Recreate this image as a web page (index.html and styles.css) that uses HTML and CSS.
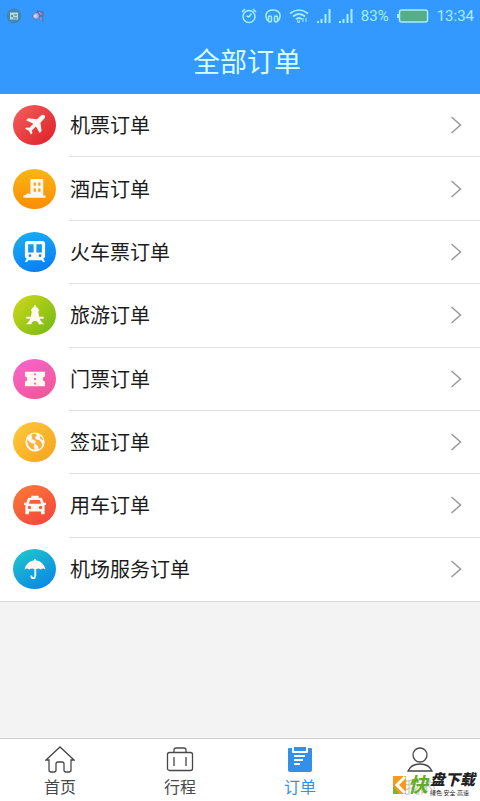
FILE: index.html
```html
<!DOCTYPE html>
<html lang="zh-CN">
<head>
<meta charset="utf-8">
<meta name="viewport" content="width=device-width, initial-scale=1">
<title>全部订单</title>
<link rel="stylesheet" href="styles.css">
</head>
<body>
<header class="header">
  <div class="status">
    <div class="notices">
      <svg width="16" height="16" viewBox="0 0 16 16"><circle cx="8" cy="8" r="7.500" fill="#4387ae"/><path d="M4 4.500h8v7H4z" fill="#b5dce6"/><path d="M5 7l2 1-2 1M8 7h3M7 10h4" stroke="#39799b" fill="none"/></svg>
      <svg width="14" height="16" viewBox="0 0 14 16"><circle cx="5" cy="8" r="3.500" fill="#8fb5ef" stroke="#6674b5"/><circle cx="4.500" cy="8" r="1.500" fill="#d8ddf5"/><path d="M6 3l6 1v5l-3-2zM8 8l4 3v3" fill="#7884bd" stroke="#5268a8"/><path d="M8 4l2 3M10 9v3" stroke="#d48daf"/></svg>
    </div>
    <div class="signals">
      <svg class="alarm" width="16" height="16" viewBox="0 0 16 16"><circle cx="8" cy="8.500" r="6"/><path d="M1 4l3-3M12 1l3 3M8 9l2.500-3.500M8 9L5.500 8"/></svg>
      <svg class="phones" width="16" height="16" viewBox="0 0 16 16"><path d="M3 13C-1 8 1 2 8 2s9 6 5 11"/><rect x="3.500" y="8" width="3" height="6" rx="1.500"/><rect x="9.500" y="8" width="3" height="6" rx="1.500"/></svg>
      <svg class="wifi" width="20" height="16" viewBox="0 0 20 16"><path d="M1 5.500q9-7 18 0M4 8.500q6-5 12 0M7 11.500q3-3 6 0" stroke-width="1.700"/><path d="M8 13h3l-1.500 2zM14 10v4M17 10v4" stroke-width="1"/></svg>
      <svg class="bars" width="14" height="16" viewBox="0 0 14 16"><path d="M1 13v2M4.500 11v4M8.500 6v9M12.500 1v14"/></svg>
      <svg class="bars" width="14" height="16" viewBox="0 0 14 16"><path d="M1 13v2M4.500 11v4M8.500 6v9M12.500 1v14"/></svg>
      <span class="percent">83%</span>
      <svg class="battery" width="32" height="14" viewBox="0 0 32 14"><rect x="2.500" y="1" width="28" height="12" rx="2" fill="#55ae87"/><path d="M1 5v4" stroke-width="2"/></svg>
      <span class="time">13:34</span>
    </div>
  </div>
  <h1 class="title">全部订单</h1>
</header>

<main class="main">
  <ul class="orders">
    <li><a class="order" href="#flight">
      <span class="badge red"><svg viewBox="0 0 24 24"><path d="M22.500 1.500c1 1 .4 2.900-1 4.300l-3.600 3.700 1.300 9.100-2.100 2-4.100-7.100-4.300 4.200.4 3.200-1.500 1.400-2.300-4-4.200-2.200L2.600 14.600l3.300.4 4.200-4.300-7.800-4L4.400 4.500l9.800 1.300L17.900 2.300c1.500-1.400 3.600-1.800 4.600-.8z"/></svg></span>
      <span class="name">机票订单</span><svg class="arrow" viewBox="0 0 12 18"><path d="M1.500 1l9 8-9 8"/></svg></a></li>
    <li><a class="order" href="#hotel">
      <span class="badge orange"><svg viewBox="0 0 24 24"><path fill-rule="evenodd" d="M7 2.500Q7 1 8.500 1h11Q21 1 21 2.500V19h2.500v2.500H-.5V19c1-.8 2-.8 2.700-.5.8-2 3.600-1.900 4.800-.6zM10.500 5v3.500h2.500V5zm5 0v3.500H18V5zm-5 6.500V15h2.500v-3.500zm5 0V15H18v-3.500z"/></svg></span>
      <span class="name">酒店订单</span><svg class="arrow" viewBox="0 0 12 18"><path d="M1.500 1l9 8-9 8"/></svg></a></li>
    <li><a class="order" href="#train">
      <span class="badge blue"><svg viewBox="0 0 24 24"><path fill-rule="evenodd" d="M4 0h16Q23 0 23 3v14q0 2-2 2l2 4h-2.500l-1-2h-15l-1 2H1l2-4q-2 0-2-2V3q0-3 3-3zM4.500 3.500v9H10.500v-9zm9 0v9H19.500v-9zM6.500 14.500a1.500 1.500 0 100 3 1.500 1.500 0 000-3zm11 0a1.500 1.500 0 100 3 1.500 1.500 0 000-3z"/></svg></span>
      <span class="name">火车票订单</span><svg class="arrow" viewBox="0 0 12 18"><path d="M1.500 1l9 8-9 8"/></svg></a></li>
    <li><a class="order" href="#travel">
      <span class="badge green"><svg viewBox="0 0 24 24"><path d="M11.200 1h1.600v2l2.700 1.500V6h1v2h-1l1 6h5v2H17q1.500 3.500 5 6h-6q-.5-3.500-4-3.500T8 22H2q3.500-2.500 5-6H2.500v-2h5l1-6h-1V6h1V4.500L11.200 3z"/></svg></span>
      <span class="name">旅游订单</span><svg class="arrow" viewBox="0 0 12 18"><path d="M1.500 1l9 8-9 8"/></svg></a></li>
    <li><a class="order" href="#ticket">
      <span class="badge pink"><svg viewBox="0 0 24 24"><path fill-rule="evenodd" d="M1 4h22v5q-2.500.5-2.500 3t2.500 3v5H1v-5q2.500-.5 2.500-3T1 9zM11 6v2h2V6zm0 5v2h2v-2zm0 5v2h2v-2z"/></svg></span>
      <span class="name">门票订单</span><svg class="arrow" viewBox="0 0 12 18"><path d="M1.500 1l9 8-9 8"/></svg></a></li>
    <li><a class="order" href="#visa">
      <span class="badge amber"><svg viewBox="0 0 24 24"><circle cx="12" cy="12" r="10.500"/><path fill="#f8b238" d="M8 4q2-1.500 5-1l1 2-2 2 1 2 4 1 3 4-1 4-3 2-1-4-3-2 1-3-4-2zM3.500 9l4 4 4 1-1 3 1 3.500Q3 19 3.500 9zM17 5q3 2 4 5l-3-1z"/></svg></span>
      <span class="name">签证订单</span><svg class="arrow" viewBox="0 0 12 18"><path d="M1.500 1l9 8-9 8"/></svg></a></li>
    <li><a class="order" href="#car">
      <span class="badge coral"><svg viewBox="0 0 24 24"><path fill-rule="evenodd" d="M8 4V2h8v2h2.500q1 0 1.500 1.500L21.500 9.500H24V12h-1.500v10h-4v-3h-13v3h-4V12H0V9.500h2.500L4 5.500Q4.500 4 5.500 4zM6.500 6.500l-1 4h13l-1-4zM6 12.800a1.800 1.800 0 100 3.600 1.800 1.800 0 000-3.600zm12 0a1.800 1.800 0 100 3.600 1.800 1.800 0 000-3.600z"/></svg></span>
      <span class="name">用车订单</span><svg class="arrow" viewBox="0 0 12 18"><path d="M1.500 1l9 8-9 8"/></svg></a></li>
    <li><a class="order" href="#airport">
      <span class="badge cyan"><svg viewBox="0 0 24 24"><path d="M11.200 1h1.600v1.500Q21 3.500 23.500 12.500q-2.700-2-5.300 0-2-1.700-4.900-.6V19q0 4-3.300 4t-3-4h2q0 2 1.200 2 1.100 0 1.100-2v-7.100Q8 10.800 5.800 12.500q-2.600-2-5.300 0Q3 3.500 11.200 2.500z"/></svg></span>
      <span class="name">机场服务订单</span><svg class="arrow" viewBox="0 0 12 18"><path d="M1.500 1l9 8-9 8"/></svg></a></li>
  </ul>
</main>

<nav class="tabs">
  <a class="tab" href="#home"><svg viewBox="0 0 30 28"><path d="M1 14L15 1l14 13h-3v10q0 2-2 2h-3q-2 0-2-2v-6q0-2-2-2h-4q-2 0-2 2v6q0 2-2 2H6q-2 0-2-2V14z"/></svg><span>首页</span></a>
  <a class="tab" href="#trips"><svg viewBox="0 0 30 28"><rect x="2.500" y="6.500" width="25" height="18" rx="2"/><path d="M9 6V4q0-2 2-2h8q2 0 2 2v2M9 11v9M21 11v9"/></svg><span>行程</span></a>
  <a class="tab active" href="#orders" aria-current="page"><svg viewBox="0 0 30 28"><path fill="currentColor" stroke="none" d="M4 2h3v4q0 1 1 1h14q1 0 1-1V2h3q1 0 1 1v21q0 2-2 2H5q-2 0-2-2V3q0-1 1-1z"/><path fill="currentColor" stroke="none" d="M9 1h12v4H9z"/><path stroke="#fff" stroke-width="2" d="M9 10h11M9 14h9M9 18h6"/></svg><span>订单</span></a>
  <a class="tab mine" href="#mine"><svg viewBox="0 0 30 28"><circle cx="15" cy="9" r="7"/><path d="M3 25q3-7 12-7t12 7z"/></svg><span>我的</span></a>
  <div class="mark">
    <svg width="13" height="18" viewBox="0 0 13 18"><path fill="#f59a19" d="M0 0h13v18H0z"/><path fill="#76b82a" d="M0 18V9l6 9z"/><path d="M12 1L4 9l8 8" fill="none" stroke="#fff" stroke-width="3"/></svg>
    <span class="mark-lead">快</span>
    <span class="mark-text"><b>盘下载</b><small>绿色·安全·高速</small></span>
  </div>
</nav>
</body>
</html>
```
FILE: styles.css
```css
* {
  box-sizing: border-box;
}

body {
  margin: 0;
  min-height: 100vh;
  display: flex;
  flex-direction: column;
  background: #f3f3f3;
  color: #1c1c1c;
  font-family: Roboto, "Noto Sans CJK SC", sans-serif;
}

a {
  color: inherit;
  text-decoration: none;
}

.header {
  background: #3399ff;
  color: #d9ffff;
}

.status {
  display: flex;
  align-items: center;
  justify-content: space-between;
  height: 32px;
  padding: 0 6px;
  color: #a5efff;
}

.notices {
  display: flex;
  gap: 9px;
}

.signals {
  display: flex;
  align-items: center;
  gap: 8px;
  font-size: 15px;
  line-height: 16px;
}

.signals svg {
  fill: none;
  stroke: currentColor;
  stroke-width: 1.5;
}

.signals .bars {
  stroke-width: 2;
}

.title {
  margin: 0;
  padding-left: 14px;
  font-size: 27px;
  font-weight: 400;
  line-height: 62px;
  text-align: center;
}

.main {
  flex: 1;
}

.orders {
  display: grid;
  grid-auto-rows: 1fr;
  min-height: 508px;
  margin: 0;
  padding: 0;
  list-style: none;
  background: #fff;
  border-bottom: 1px solid #d6d6d6;
}

.orders li {
  display: grid;
  position: relative;
}

.orders li:not(:last-child)::after {
  content: "";
  position: absolute;
  left: 69px;
  right: 0;
  bottom: 0;
  height: 1px;
  background: #e0e0e0;
}

.order {
  display: flex;
  align-items: center;
  gap: 14px;
  padding: 0 18px 1px 13px;
}

.badge {
  display: grid;
  place-items: center;
  width: 43px;
  height: 40px;
  border-radius: 50%;
}

.badge svg {
  width: 24px;
  height: 22px;
  overflow: visible;
  fill: #fff8f0;
}

.red { background: linear-gradient(135deg, #f5605c, #dc1f28); }
.orange { background: linear-gradient(180deg, #f9b713, #fb8c05); }
.blue { background: linear-gradient(160deg, #18b2f5, #0a78f0); }
.green { background: linear-gradient(135deg, #d2d91b, #70b814); }
.pink { background: linear-gradient(150deg, #f765d0, #f25591); }
.amber { background: linear-gradient(135deg, #fdcb3c, #f9a01f); }
.coral { background: linear-gradient(150deg, #fb7c35, #f4413e); }
.cyan { background: linear-gradient(150deg, #20ccc8, #087fe9); }

.name {
  flex: 1;
  padding-top: 2px;
  font-size: 20px;
  line-height: 28px;
}

.arrow {
  width: 12px;
  height: 18px;
  fill: none;
  stroke: #999;
  stroke-width: 1.5;
}

.tabs {
  position: relative;
  display: grid;
  grid-template-columns: repeat(4, 1fr);
  background: #fff;
  border-top: 1px solid #cfcfcf;
}

.tab {
  display: flex;
  flex-direction: column;
  align-items: center;
  gap: 2px;
  padding: 7px 0 1px;
  color: #484848;
  font-size: 16px;
  line-height: 24px;
}

.tab svg {
  width: 30px;
  height: 28px;
  fill: none;
  stroke: currentColor;
  stroke-width: 1.3;
}

.tab.active {
  color: #3290e8;
}

.mine span {
  color: #ccc;
}

.mark {
  position: absolute;
  right: 5px;
  bottom: 4px;
  display: flex;
  align-items: center;
  gap: 2px;
  color: #222;
}

.mark-lead {
  color: #62ad20;
  font-size: 20px;
  font-weight: 700;
  font-style: italic;
  line-height: 24px;
}

.mark-text {
  display: grid;
}

.mark-text b {
  font-size: 15px;
  font-style: italic;
  font-weight: 900;
  line-height: 15px;
}

.mark-text small {
  font-size: 6px;
  line-height: 9px;
}
```
